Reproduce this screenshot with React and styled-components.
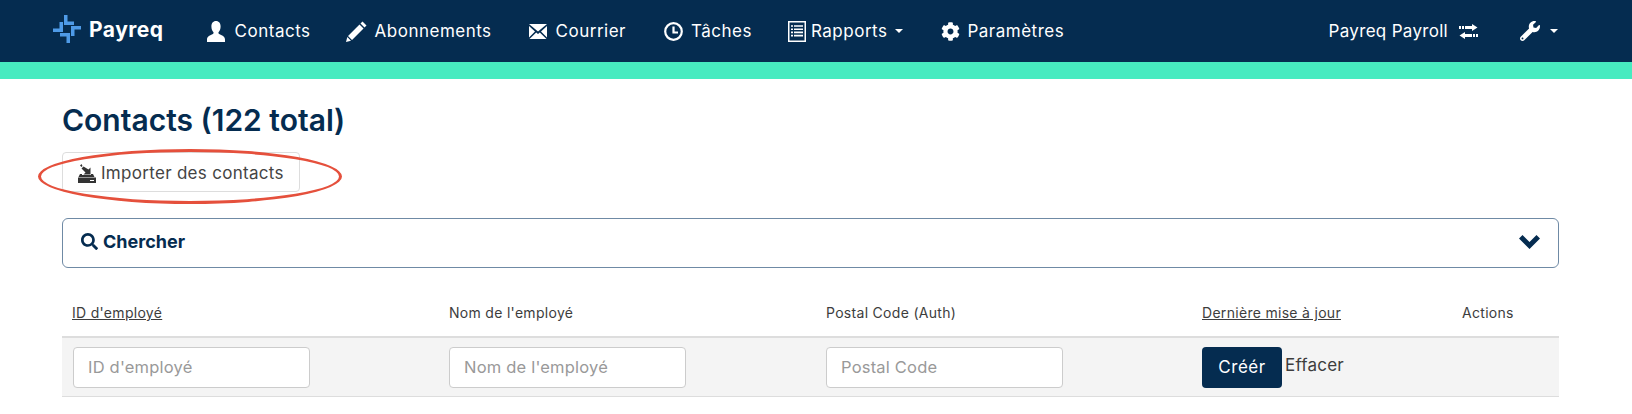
import React from 'react';
import styled, { createGlobalStyle } from 'styled-components';
import { FaCog, FaWrench, FaSearch } from 'react-icons/fa';

const GlobalStyle = createGlobalStyle`
  body {
    margin: 0;
    background: #fff;
    font-family: Inter, "Open Sans", sans-serif;
    color: #3d3d3d;
  }
`;

const navy = '#052c50';

const Navbar = styled.nav`
  height: 62px;
  background: ${navy};
  border-bottom: 17px solid #47ebc0;
  display: flex;
  align-items: center;
  padding: 0 74px 0 53px;
  color: #fff;
  font-size: 17px;
  letter-spacing: 0.5px;
`;

const Brand = styled.div`
  display: flex;
  align-items: center;
  gap: 8px;
  font-size: 21px;
  font-weight: 700;
  margin-right: 42px;
  position: relative;
  top: -2px;
`;

const NavItem = styled.div`
  display: flex;
  align-items: center;
  gap: ${p => p.$gap ?? 8}px;
  margin-right: ${p => p.$mr ?? 36}px;
  white-space: nowrap;
  letter-spacing: ${p => p.$spacing ?? 0.5}px;
  svg { flex: none; }
`;

const Spacer = styled.div`
  flex: 1;
`;

const Caret = styled.span`
  width: 0;
  height: 0;
  border-left: 4px solid transparent;
  border-right: 4px solid transparent;
  border-top: 4px solid #fff;
  margin-left: ${p => p.$ml ?? 3}px;
`;

const Content = styled.main`
  padding: 24px 73px 0 62px;
`;

const Title = styled.h1`
  margin: 0;
  font-size: 30px;
  line-height: 34px;
  font-weight: 600;
  color: ${navy};
`;

const ImportWrap = styled.div`
  position: relative;
  width: 238px;
  margin-top: 15px;
`;

const ImportButton = styled.button`
  box-sizing: border-box;
  width: 238px;
  height: 40px;
  padding: 2px 0 0 15px;
  display: flex;
  align-items: center;
  gap: 5px;
  background: #fff;
  border: 1px solid #ddd;
  border-radius: 4px;
  font: inherit;
  font-size: 17px;
  letter-spacing: 0.3px;
  color: #444;
`;

const Ellipse = styled.span`
  position: absolute;
  left: -24px;
  top: -3px;
  width: 304px;
  height: 55px;
  border: 3.5px solid #e5503c;
  border-radius: 50%;
  box-sizing: border-box;
  pointer-events: none;
`;

const SearchPanel = styled.div`
  box-sizing: border-box;
  height: 50px;
  margin-top: 26px;
  padding: 0 18px 3px 18px;
  display: flex;
  align-items: center;
  justify-content: space-between;
  border: 1px solid #6f8aa5;
  border-radius: 6px;
  color: ${navy};
`;

const SearchLabel = styled.div`
  display: flex;
  align-items: center;
  gap: 5px;
  font-size: 18px;
  font-weight: 700;
`;

const columns = '377px 377px 376px 260px 1fr';

const HeadRow = styled.div`
  display: grid;
  grid-template-columns: ${columns};
  margin-top: 34px;
  height: 34px;
  font-size: 14px;
  line-height: 22px;
  letter-spacing: 0.3px;
`;

const HeadCell = styled.div`
  padding-left: 10px;
  text-decoration: ${p => (p.$sort ? 'underline' : 'none')};
  white-space: nowrap;
`;

const FilterRow = styled.div`
  display: grid;
  grid-template-columns: ${columns};
  box-sizing: border-box;
  height: 61px;
  align-items: center;
  background: #f4f4f4;
  border-top: 2px solid #ddd;
  border-bottom: 1px solid #ddd;
`;

const FilterCell = styled.div`
  padding-left: ${p => p.$pl ?? 10}px;
  display: flex;
  align-items: flex-start;
`;

const Input = styled.input`
  box-sizing: border-box;
  width: 237px;
  height: 41px;
  padding: 0 14px;
  background: #fff;
  border: 1px solid #ccc;
  border-radius: 4px;
  font: inherit;
  font-size: 16.5px;
  letter-spacing: 0.2px;
  &::placeholder { color: #999; opacity: 1; }
`;

const CreateButton = styled.button`
  width: 80px;
  height: 41px;
  padding: 0;
  border: 0;
  border-radius: 4px;
  background: ${navy};
  color: #fff;
  font: inherit;
  font-size: 17px;
  letter-spacing: 0.5px;
`;

const ClearLink = styled.span`
  margin-left: 3px;
  margin-top: 8px;
  font-size: 17px;
  letter-spacing: 0.2px;
`;

const LOGO_ARM = 'M11 0h3.500v6.500H21V10H11z';

const Logo = () => (
  <svg width="28" height="28" viewBox="0 0 28 28" fill="#4f9be8">
    {[0, 90, 180, 270].map(deg => (
      <path key={deg} d={LOGO_ARM} transform={`rotate(${deg} 14 14)`} />
    ))}
  </svg>
);

const UserIcon = () => (
  <svg width="20" height="21" viewBox="0 0 20 21" fill="#fff">
    <path d="M10 0c3 0 4.600 2.300 4.600 5.400 0 2.300-.8 4.300-1.900 5.600-.5.700-.4 1.500.4 2 2.700 1.300 5.900 2.300 5.900 5.500V21H1v-2.500c0-3.200 3.200-4.200 5.900-5.500.8-.5.9-1.300.4-2-1.100-1.300-1.900-3.300-1.900-5.600C5.400 2.300 7 0 10 0z" />
  </svg>
);

const PencilIcon = () => (
  <svg width="21" height="21" viewBox="0 0 21 21" fill="#fff">
    <path d="M16.500 0.500l4 4-2 2-4-4zM13.500 3.500l4 4L6 19l-4-4zM1.300 16l3.700 3.700L0 21z" />
  </svg>
);

const MailIcon = () => (
  <svg width="20" height="17" viewBox="0 0 20 17" fill="#fff">
    <path d="M1 1h18l-9 7.500z" />
    <path d="M1 3v11.500L7 8.500zM19 3v11.500L13 8.500z" />
    <path d="M1.500 16h17l-6.700-6.500L10 11 8.200 9.500z" />
  </svg>
);

const ClockIcon = () => (
  <svg width="19" height="19" viewBox="0 0 19 19" fill="none" stroke="#fff" strokeWidth="2.200">
    <circle cx="9.500" cy="9.500" r="8.300" />
    <path d="M9.500 4.500V10.500h4.500" />
  </svg>
);

const ReportIcon = () => (
  <svg width="18" height="21" viewBox="0 0 18 21" fill="none" stroke="#fff">
    <rect x="0.750" y="0.750" width="16.500" height="19.500" strokeWidth="1.500" />
    <path d="M3 5h2M6 5h9M3 8.200h2M6 8.200h9M3 11.400h2M6 11.400h9M3 14.600h2M6 14.600h9" strokeWidth="1.600" />
  </svg>
);

const TransferIcon = () => (
  <svg width="19" height="15" viewBox="0 0 19 15" fill="#fff">
    <path d="M13 0l5.500 3.500L13 7V5H6V2h7zM0 2h2v3H0zM3 2h2v3H3z" />
    <path d="M6 8L.500 11.500 6 15v-2h7v-3H6zM17 10h2v3h-2zM14 10h2v3h-2z" />
  </svg>
);

const ImportIcon = () => (
  <svg width="18" height="19" viewBox="0 0 18 19" fill="#333">
    <path d="M3.500 0L2 1.500l1.500 1.500 1-1zM5.500 2.500L3.500 4.500l4 4-2 2h7v-7l-2 2z" />
    <path d="M2 10h2v1h9v-1h2l1.500 3H.500z" />
    <path fillRule="evenodd" d="M0 13.500h18V19H0zM12 16v1h4v-1z" />
  </svg>
);

const ChevronIcon = () => (
  <svg width="21" height="14" viewBox="0 0 21 14" fill={navy}>
    <path d="M0 3.500L3.500 0l7 7 7-7L21 3.500 10.500 14z" />
  </svg>
);

export default function App() {
  return (
    <>
      <GlobalStyle />
      <Navbar>
        <Brand><Logo />Payreq</Brand>
        <NavItem $gap={9} $mr={35}><UserIcon />Contacts</NavItem>
        <NavItem><PencilIcon />Abonnements</NavItem>
        <NavItem $mr={38}><MailIcon />Courrier</NavItem>
        <NavItem $mr={36}><ClockIcon />Tâches</NavItem>
        <NavItem $gap={5} $mr={38}><ReportIcon />Rapports <Caret /></NavItem>
        <NavItem $gap={7}><FaCog size={19} />Paramètres</NavItem>
        <Spacer />
        <NavItem $gap={11} $mr={42} $spacing={0.3}>Payreq Payroll <TransferIcon /></NavItem>
        <NavItem $gap={7} $mr={0}><FaWrench size={20} /><Caret /></NavItem>
      </Navbar>
      <Content>
        <Title>Contacts (122 total)</Title>
        <ImportWrap>
          <ImportButton><ImportIcon />Importer des contacts</ImportButton>
          <Ellipse />
        </ImportWrap>
        <SearchPanel>
          <SearchLabel><FaSearch size={17} />Chercher</SearchLabel>
          <ChevronIcon />
        </SearchPanel>
        <HeadRow>
          <HeadCell $sort>ID d'employé</HeadCell>
          <HeadCell>Nom de l'employé</HeadCell>
          <HeadCell>Postal Code (Auth)</HeadCell>
          <HeadCell $sort>Dernière mise à jour</HeadCell>
          <HeadCell>Actions</HeadCell>
        </HeadRow>
        <FilterRow>
          <FilterCell $pl={11}><Input placeholder="ID d'employé" /></FilterCell>
          <FilterCell><Input placeholder="Nom de l'employé" /></FilterCell>
          <FilterCell><Input placeholder="Postal Code" /></FilterCell>
          <FilterCell><CreateButton>Créér</CreateButton><ClearLink>Effacer</ClearLink></FilterCell>
          <div />
        </FilterRow>
      </Content>
    </>
  );
}
